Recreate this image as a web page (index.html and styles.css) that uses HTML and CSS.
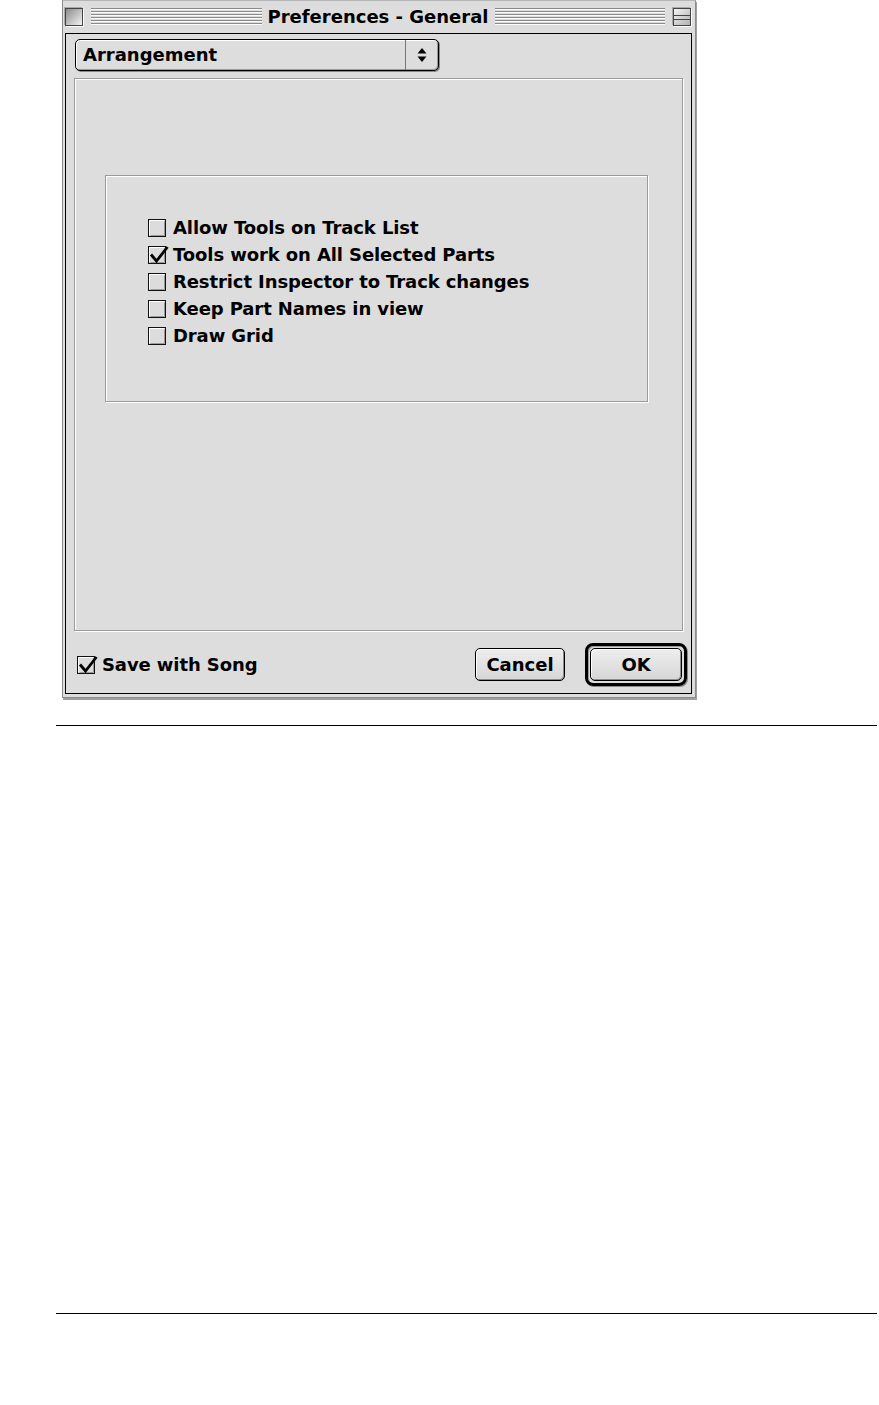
FILE: index.html
```html
<!DOCTYPE html>
<html>

<head>
  <meta charset="utf-8">
  <link rel="stylesheet" href="styles.css">
</head>

<body>
  <div class="window">
    <div class="titlebar">
      <div class="close-box"></div>
      <div class="stripes"></div>
      <div class="title">Preferences - General</div>
      <div class="stripes"></div>
      <div class="shade-box"><span></span></div>
    </div>

    <div class="frame">
      <div class="popup">
        <div class="popup-label">Arrangement</div>
        <div class="popup-arrows">
          <svg width="10" height="16" viewBox="0 0 10 16">
            <path d="M5 1 L9.5 6.5 L0.5 6.5 Z" fill="#000" />
            <path d="M5 15 L9.5 9.5 L0.5 9.5 Z" fill="#000" />
          </svg>
        </div>
      </div>

      <div class="panel">
        <div class="group">
          <div class="option">
            <svg class="checkbox" width="18" height="18" viewBox="0 0 18 18">
              <rect x="0.5" y="0.5" width="17" height="17" fill="#dcdcdc" stroke="#111" />
              <polyline points="1.5,16 1.5,1.5 16,1.5" fill="none" stroke="#fff" />
              <polyline points="2.5,16.5 16.5,16.5 16.5,2.5" fill="none" stroke="#9a9a9a" />
            </svg>
            <span>Allow Tools on Track List</span>
          </div>
          <div class="option">
            <svg class="checkbox" width="18" height="18" viewBox="0 0 18 18">
              <rect x="0.5" y="0.5" width="17" height="17" fill="#dcdcdc" stroke="#111" />
              <polyline points="1.5,16 1.5,1.5 16,1.5" fill="none" stroke="#fff" />
              <polyline points="2.5,16.5 16.5,16.5 16.5,2.5" fill="none" stroke="#9a9a9a" />
              <path d="M3 8.5 L8.5 15 L19.5 1" fill="none" stroke="#000" stroke-width="2.8" />
            </svg>
            <span>Tools work on All Selected Parts</span>
          </div>
          <div class="option">
            <svg class="checkbox" width="18" height="18" viewBox="0 0 18 18">
              <rect x="0.5" y="0.5" width="17" height="17" fill="#dcdcdc" stroke="#111" />
              <polyline points="1.5,16 1.5,1.5 16,1.5" fill="none" stroke="#fff" />
              <polyline points="2.5,16.5 16.5,16.5 16.5,2.5" fill="none" stroke="#9a9a9a" />
            </svg>
            <span>Restrict Inspector to Track changes</span>
          </div>
          <div class="option">
            <svg class="checkbox" width="18" height="18" viewBox="0 0 18 18">
              <rect x="0.5" y="0.5" width="17" height="17" fill="#dcdcdc" stroke="#111" />
              <polyline points="1.5,16 1.5,1.5 16,1.5" fill="none" stroke="#fff" />
              <polyline points="2.5,16.5 16.5,16.5 16.5,2.5" fill="none" stroke="#9a9a9a" />
            </svg>
            <span>Keep Part Names in view</span>
          </div>
          <div class="option">
            <svg class="checkbox" width="18" height="18" viewBox="0 0 18 18">
              <rect x="0.5" y="0.5" width="17" height="17" fill="#dcdcdc" stroke="#111" />
              <polyline points="1.5,16 1.5,1.5 16,1.5" fill="none" stroke="#fff" />
              <polyline points="2.5,16.5 16.5,16.5 16.5,2.5" fill="none" stroke="#9a9a9a" />
            </svg>
            <span>Draw Grid</span>
          </div>
        </div>
      </div>

      <div class="footer">
        <div class="option">
          <svg class="checkbox" width="18" height="18" viewBox="0 0 18 18">
            <rect x="0.5" y="0.5" width="17" height="17" fill="#dcdcdc" stroke="#111" />
            <polyline points="1.5,16 1.5,1.5 16,1.5" fill="none" stroke="#fff" />
            <polyline points="2.5,16.5 16.5,16.5 16.5,2.5" fill="none" stroke="#9a9a9a" />
            <path d="M3 8.5 L8.5 15 L19.5 1" fill="none" stroke="#000" stroke-width="2.8" />
          </svg>
          <span>Save with Song</span>
        </div>
        <div class="buttons">
          <div class="button button-cancel">Cancel</div>
          <div class="default-ring">
            <div class="button button-ok">OK</div>
          </div>
        </div>
      </div>
    </div>
  </div>

  <div class="rule rule-top"></div>
  <div class="rule rule-bottom"></div>
</body>

</html>
```

FILE: styles.css
```css
* {
  margin: 0;
  padding: 0;
  box-sizing: border-box;
}

body {
  background: #fff;
  font-family: "DejaVu Sans", Verdana, sans-serif;
  font-weight: bold;
  font-size: 18px;
  color: #000;
}

/* window chrome */

.window {
  margin-left: 62px;
  width: 634px;
  background: #dddddd;
  border: 1px solid #8c8c8c;
  border-top-color: #b5b5b5;
  box-shadow: 1px 2px 0 #a0a0a0;
  padding: 0 3px 3px 2px;
}

.titlebar {
  display: flex;
  align-items: center;
  height: 32px;
  gap: 6px;
  padding: 0 1px 0 0;
}

.close-box,
.shade-box {
  flex-shrink: 0;
  width: 18px;
  height: 18px;
  border: 1px solid #444;
  background: linear-gradient(135deg, #8a8a8a, #f4f4f4);
  box-shadow: 1px 1px 0 #fff, -1px -1px 0 #aaa;
}

.close-box {
  margin-right: 2px;
}

.shade-box {
  margin-left: 2px;
  background: linear-gradient(135deg, #f4f4f4, #b0b0b0);
  display: flex;
  align-items: center;
}

.shade-box span {
  display: block;
  width: 100%;
  height: 5px;
  border-top: 1px solid #444;
  border-bottom: 1px solid #444;
}

.stripes {
  flex: 1;
  height: 18px;
  background: repeating-linear-gradient(to bottom, #8a8a8a 0 1px, #fafafa 1px 2px, #dddddd 2px 3px);
}

.title {
  flex-shrink: 0;
  white-space: nowrap;
  line-height: 32px;
}

.frame {
  height: 661px;
  border: 1px solid #000;
  padding: 5px 4px 7px 9px;
  display: flex;
  flex-direction: column;
}

/* popup menu */

.popup {
  display: flex;
  width: 364px;
  height: 32px;
  border: 1px solid #000;
  border-radius: 5px;
  background: #dddddd;
  box-shadow: inset 1px 1px 0 #fff, inset -1px -1px 0 #999, 1px 1px 0 #888;
}

.popup-label {
  flex: 1;
  padding-left: 7px;
  line-height: 30px;
}

.popup-arrows {
  width: 33px;
  border-left: 1px solid #777;
  display: flex;
  align-items: center;
  justify-content: center;
}

/* panel and group box */

.panel {
  margin: 7px 0 0 -1px;
  width: 609px;
  height: 553px;
  border: 1px solid #9a9a9a;
  box-shadow: inset 1px 1px 0 #fff, 1px 1px 0 #fff;
}

.group {
  margin: 96px 0 0 30px;
  width: 543px;
  height: 227px;
  border: 1px solid #9a9a9a;
  box-shadow: inset 1px 1px 0 #fff, 1px 1px 0 #fff;
  padding: 38px 0 0 42px;
}

.option {
  display: flex;
  align-items: center;
  gap: 7px;
  height: 27px;
  white-space: nowrap;
  letter-spacing: -0.1px;
}

.checkbox {
  flex-shrink: 0;
  overflow: visible;
}

/* footer */

.footer {
  margin-top: 12px;
  height: 43px;
  display: flex;
  align-items: center;
  justify-content: space-between;
  padding-left: 2px;
}

.buttons {
  display: flex;
  align-items: center;
  gap: 20px;
}

.button {
  height: 33px;
  border: 1px solid #000;
  border-radius: 5px;
  background: linear-gradient(to bottom, #eeeeee, #d6d6d6);
  box-shadow: inset 1px 1px 0 #fff, inset -1px -1px 0 #8c8c8c;
  text-align: center;
  line-height: 31px;
}

.button-cancel {
  width: 90px;
}

.button-ok {
  width: 92px;
}

.default-ring {
  border: 3px solid #000;
  border-radius: 8px;
  padding: 2px;
  box-shadow: inset 1px 1px 0 #999, 1px 1px 0 #888;
}

/* page rules */

.rule {
  margin-left: 56px;
  width: 821px;
  border-top: 1px solid #000;
}

.rule-top {
  margin-top: 27px;
}

.rule-bottom {
  margin-top: 587px;
}
```
